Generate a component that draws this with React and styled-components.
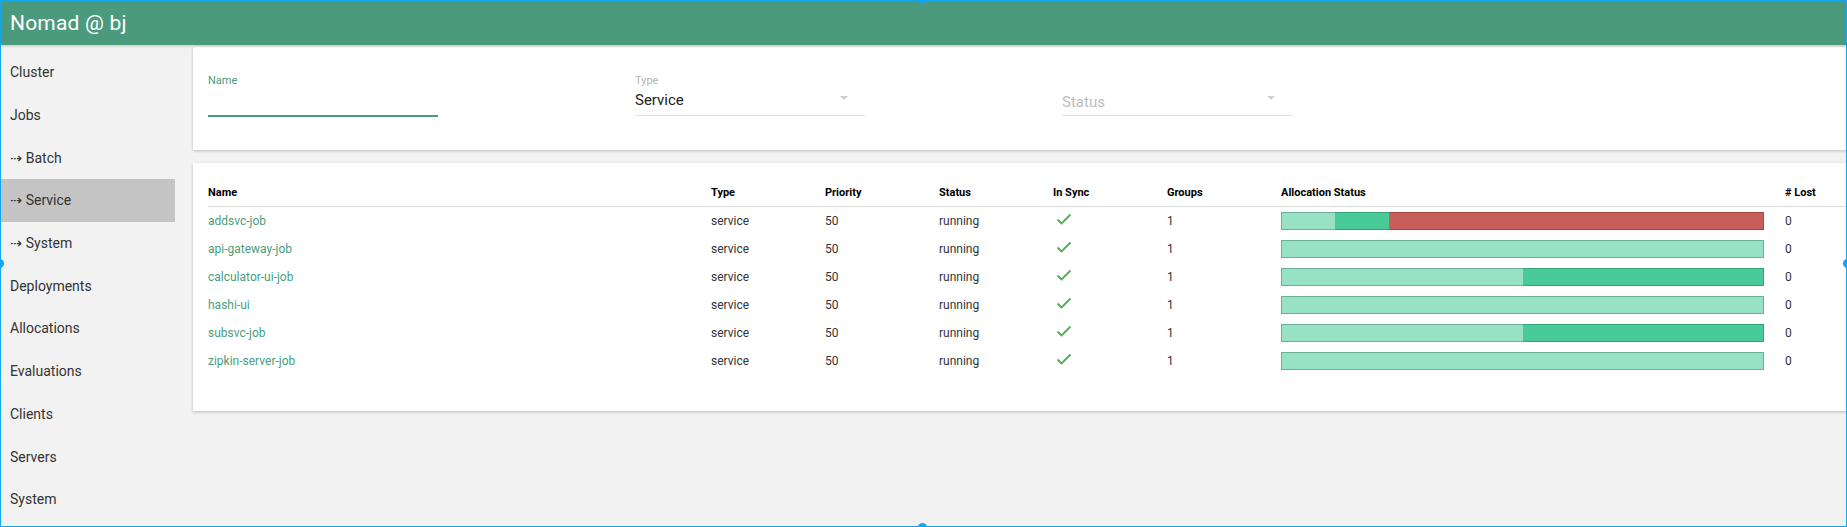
import styled, { createGlobalStyle } from "styled-components";

const GlobalStyle = createGlobalStyle`
  html, body {
    margin: 0;
    padding: 0;
    overflow: hidden;
    background: #f2f2f2;
  }
  body {
    font-family: Roboto, "Liberation Sans", sans-serif;
    color: #333;
  }
`;

const Page = styled.div`
  height: 527px;
  display: flex;
  flex-direction: column;
`;

const TopBar = styled.header`
  height: 45px;
  flex-shrink: 0;
  background: #4b9a7d;
  box-shadow: 0 1px 3px rgba(0, 0, 0, 0.2);
  position: relative;
  z-index: 1;
  display: flex;
  align-items: center;
  padding: 0 10px;
`;

const Title = styled.h1`
  margin: 0;
  font-size: 21px;
  font-weight: 400;
  color: #fff;
  letter-spacing: 0.2px;
`;

const Body = styled.div`
  flex: 1;
  min-height: 0;
  display: flex;
`;

const Sidebar = styled.nav`
  width: 175px;
  flex-shrink: 0;
  padding-top: 6px;
  background: #f2f2f2;
`;

const NavItem = styled.div`
  height: 42.7px;
  display: flex;
  align-items: center;
  padding: 0 10px;
  font-size: 14px;
  color: #333;
  background: ${(p) => (p.$active ? "#c4c4c4" : "transparent")};
`;

const Arrow = styled.span`
  font-family: "DejaVu Sans", sans-serif;
  font-size: 14px;
  margin-right: 4px;
`;

const Main = styled.main`
  flex: 1;
  min-width: 0;
  overflow: hidden;
  padding: 2px 0 0 18px;
  display: flex;
  flex-direction: column;
  gap: 13px;
`;

const Card = styled.section`
  width: 1720px;
  flex-shrink: 0;
  background: #fff;
  box-shadow: 0 1px 3px rgba(0, 0, 0, 0.22);
  padding: ${(p) => p.$pad};
  box-sizing: border-box;
`;

const Filters = styled.div`
  display: flex;
  gap: 197px;
`;

const Field = styled.div`
  width: 230px;
  height: 41px;
  display: flex;
  flex-direction: column;
  justify-content: ${(p) => (p.$placeholder ? "flex-end" : "flex-start")};
  border-bottom: ${(p) => (p.$focused ? "2px solid #4b9a7d" : "1px solid #e0e0e0")};
  position: relative;
`;

const Label = styled.label`
  font-size: 11px;
  line-height: 14px;
  color: ${(p) => (p.$focused ? "#4b9a7d" : "#b5b5b5")};
`;

const Value = styled.div`
  font-size: 15px;
  line-height: 20px;
  margin-top: 2px;
  color: ${(p) => (p.$muted ? "#bdbdbd" : "#222")};
  padding-bottom: ${(p) => (p.$muted ? "3px" : "0")};
`;

const Caret = styled.span`
  position: absolute;
  right: 17px;
  top: 22px;
  width: 0;
  height: 0;
  border-left: 4px solid transparent;
  border-right: 4px solid transparent;
  border-top: 4px solid #d0d0d0;
`;

const Table = styled.div`
  display: flex;
  flex-direction: column;
`;

const Row = styled.div`
  display: grid;
  grid-template-columns: 503px 114px 114px 114px 114px 114px 504px 100px;
  height: 28px;
  align-items: center;
  border-bottom: ${(p) => (p.$head ? "1.5px solid #dcdcdc" : "none")};
`;

const HeadCell = styled.div`
  font-size: 11px;
  font-weight: 700;
  color: #000;
`;

const Cell = styled.div`
  font-size: 12px;
  color: ${(p) => (p.$link ? "#4b9d80" : "#333")};
  display: flex;
  align-items: center;
`;

const Check = styled.svg`
  width: 16px;
  height: 12px;
  margin: -5px 0 0 3px;
`;

const Bar = styled.div`
  width: 483px;
  height: 18px;
  display: flex;
`;

const Segment = styled.div`
  height: 100%;
  box-sizing: border-box;
  background: ${(p) => p.$fill};
  border-top: 1px solid ${(p) => p.$edge};
  border-bottom: 1px solid ${(p) => p.$edge};
  &:first-child {
    border-left: 1px solid ${(p) => p.$edge};
  }
  &:last-child {
    border-right: 1px solid ${(p) => p.$edge};
  }
`;

const Frame = styled.div`
  position: fixed;
  inset: 0;
  border: 1.5px solid #12a6ee;
  pointer-events: none;
  z-index: 10;
`;

const Handle = styled.span`
  position: absolute;
  width: 9px;
  height: 9px;
  border-radius: 50%;
  background: #12a6ee;
  ${(p) => p.$side === "top" && "top: -6px; left: 917px;"}
  ${(p) => p.$side === "bottom" && "bottom: -6px; left: 917px;"}
  ${(p) => p.$side === "left" && "left: -6px; top: 258px;"}
  ${(p) => p.$side === "right" && "right: -6px; top: 258px;"}
`;

const nav = [
  { label: "Cluster" },
  { label: "Jobs" },
  { label: "Batch", sub: true },
  { label: "Service", sub: true, active: true },
  { label: "System", sub: true },
  { label: "Deployments" },
  { label: "Allocations" },
  { label: "Evaluations" },
  { label: "Clients" },
  { label: "Servers" },
  { label: "System" },
];

const LIGHT = { fill: "#97e2c5", edge: "#6caf98" };
const MID = { fill: "#48cb98", edge: "#36a37a" };
const RED = { fill: "#c75e5a", edge: "#a24946" };

const jobs = [
  { name: "addsvc-job", bar: [[LIGHT, 1], [MID, 1], [RED, 7]] },
  { name: "api-gateway-job", bar: [[LIGHT, 1]] },
  { name: "calculator-ui-job", bar: [[LIGHT, 1], [MID, 1]] },
  { name: "hashi-ui", bar: [[LIGHT, 1]] },
  { name: "subsvc-job", bar: [[LIGHT, 1], [MID, 1]] },
  { name: "zipkin-server-job", bar: [[LIGHT, 1]] },
];

const heads = ["Name", "Type", "Priority", "Status", "In Sync", "Groups", "Allocation Status", "# Lost"];

const App = () => {
  return (
    <Page>
      <GlobalStyle />
      <TopBar>
        <Title>Nomad @ bj</Title>
      </TopBar>
      <Body>
        <Sidebar>
          {nav.map((item, i) => (
            <NavItem key={i} $active={item.active}>
              {item.sub && <Arrow>⇢</Arrow>}
              {item.label}
            </NavItem>
          ))}
        </Sidebar>
        <Main>
          <Card $pad="27px 15px 33px">
            <Filters>
              <Field $focused>
                <Label $focused>Name</Label>
              </Field>
              <Field>
                <Label>Type</Label>
                <Value>Service</Value>
                <Caret />
              </Field>
              <Field $placeholder>
                <Value $muted>Status</Value>
                <Caret />
              </Field>
            </Filters>
          </Card>
          <Card $pad="15px 15px 36px">
            <Table>
              <Row $head>
                {heads.map((h) => (
                  <HeadCell key={h}>{h}</HeadCell>
                ))}
              </Row>
              {jobs.map((job) => (
                <Row key={job.name}>
                  <Cell $link>{job.name}</Cell>
                  <Cell>service</Cell>
                  <Cell>50</Cell>
                  <Cell>running</Cell>
                  <Cell>
                    <Check viewBox="0 0 16 12">
                      <polyline points="1.5,6.5 5.5,10.5 14.5,1.5" fill="none" stroke="#4caf50" strokeWidth="1.8" />
                    </Check>
                  </Cell>
                  <Cell>1</Cell>
                  <Cell>
                    <Bar>
                      {job.bar.map(([c, n], i) => (
                        <Segment key={i} $fill={c.fill} $edge={c.edge} style={{ flex: n }} />
                      ))}
                    </Bar>
                  </Cell>
                  <Cell>0</Cell>
                </Row>
              ))}
            </Table>
          </Card>
        </Main>
      </Body>
      <Frame>
        <Handle $side="top" />
        <Handle $side="bottom" />
        <Handle $side="left" />
        <Handle $side="right" />
      </Frame>
    </Page>
  );
};

export default App;
